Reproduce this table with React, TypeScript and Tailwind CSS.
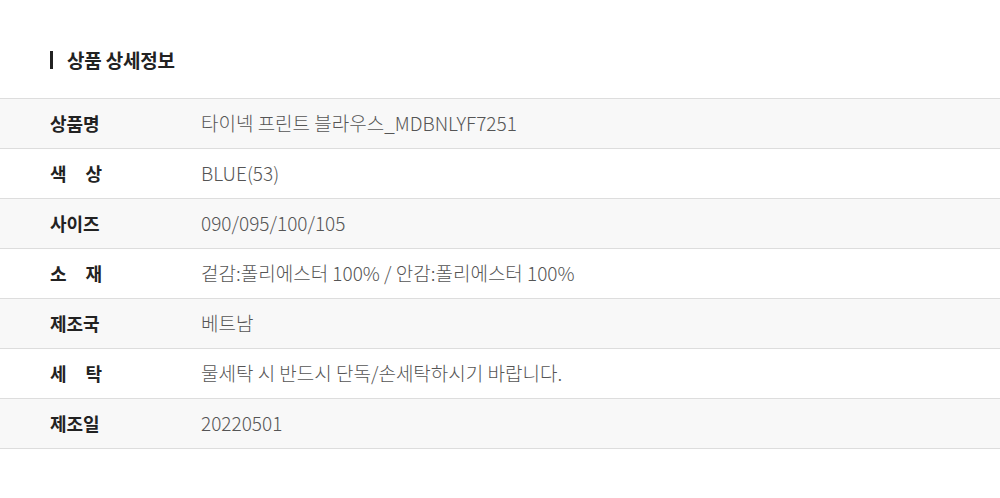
const rows: { label: string[]; value: string }[] = [
  { label: ["상품명"], value: "타이넥 프린트 블라우스_MDBNLYF7251" },
  { label: ["색", "상"], value: "BLUE(53)" },
  { label: ["사이즈"], value: "090/095/100/105" },
  { label: ["소", "재"], value: "겉감:폴리에스터 100% / 안감:폴리에스터 100%" },
  { label: ["제조국"], value: "베트남" },
  { label: ["세", "탁"], value: "물세탁 시 반드시 단독/손세탁하시기 바랍니다." },
  { label: ["제조일"], value: "20220501" },
];

export default function App() {
  return (
    <div className="w-[1000px] h-[498px] overflow-hidden bg-white [font-family:'Noto_Sans_CJK_KR','Noto_Sans',sans-serif]">
      <div className="flex items-center h-[18px] mt-[51px] ml-[50px]">
        <span className="w-[3px] h-[18px] bg-[#222]" />
        <h2 className="ml-[14px] text-[19px] leading-[18px] font-bold text-[#222] tracking-[-0.2px]">상품 상세정보</h2>
      </div>
      <div className="mt-[29px] border-t border-[#ddd]">
        {rows.map((row, i) => (
          <div
            key={i}
            className={`flex items-center h-[50px] border-b border-[#ddd] ${i % 2 === 0 ? "bg-[#f8f8f8]" : "bg-white"}`}
          >
            <div
              className={`ml-[50px] w-[52px] flex text-[18px] leading-[24px] font-bold text-[#222] -mt-[1px] ${row.label.length > 1 ? "justify-between" : ""}`}
            >
              {row.label.map((c, j) => (
                <span key={j}>{c}</span>
              ))}
            </div>
            <div className="ml-[99px] text-[19px] leading-[24px] font-light text-[#555] -mt-[1px]">{row.value}</div>
          </div>
        ))}
      </div>
    </div>
  );
}
